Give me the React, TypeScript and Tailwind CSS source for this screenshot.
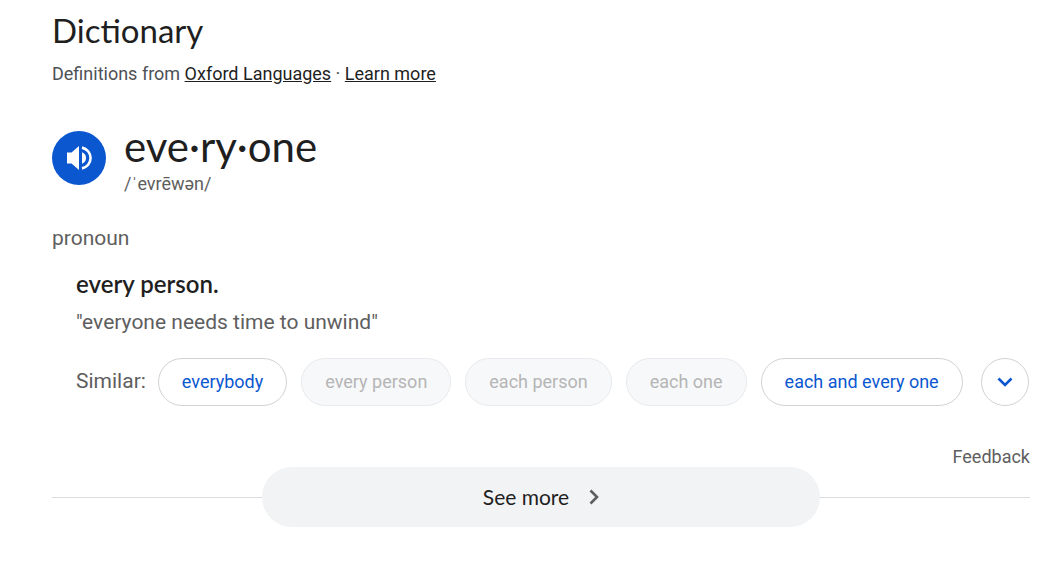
import React from 'react'

type Synonym = {
  label: string
  linked: boolean
}

const synonyms: Synonym[] = [
  { label: 'everybody', linked: true },
  { label: 'every person', linked: false },
  { label: 'each person', linked: false },
  { label: 'each one', linked: false },
  { label: 'each and every one', linked: true }
]

function SpeakerIcon() {
  return (
    <svg viewBox="0 0 54 54" className="h-[54px] w-[54px]" aria-hidden="true">
      <path d="M15 21.5h4.5l7.5-6.5v24l-7.5-6.5H15z" fill="#fff" />
      <path d="M30 21.2a6.2 6.2 0 0 1 0 11.6z" fill="#fff" />
      <path d="M30 16.6a10.6 10.6 0 0 1 0 20.8" fill="none" stroke="#fff" strokeWidth="2.6" />
    </svg>
  )
}

function SynonymChip({ label, linked }: Synonym) {
  return (
    <button
      type="button"
      disabled={!linked}
      className={`h-12 rounded-full border px-[23px] text-lg whitespace-nowrap ${
        linked ? 'border-[#d2d2d2] bg-white text-[#0b57d0]' : 'border-[#e8eaed] bg-[#f7f8fa] text-[#b5b5b5]'
      }`}
    >
      {label}
    </button>
  )
}

export default function App() {
  return (
    <main className="bg-white pt-2 pr-8 pb-9 pl-[52px] font-['Roboto',sans-serif] text-[#5e5e5e]">
      {/* Heading */}
      <h1 className="font-['Lato',sans-serif] text-[33px] leading-[44px] text-[#1f1f1f]">Dictionary</h1>
      <p className="mt-2 text-lg leading-7 text-[#4d5156]">
        Definitions from{' '}
        <a href="#oxford" className="text-[#1f1f1f] underline">Oxford Languages</a>
        {' · '}
        <a href="#learn-more" className="text-[#1f1f1f] underline">Learn more</a>
      </p>

      {/* Word and pronunciation */}
      <div className="mt-8 flex items-center gap-[18px]">
        <button type="button" aria-label="Listen" className="shrink-0 rounded-full bg-[#0b57d0]">
          <SpeakerIcon />
        </button>
        <div>
          <h2 className="font-['Lato',sans-serif] text-[42px] leading-[52px] text-[#1f1f1f]">eve·ry·one</h2>
          <p className="text-lg leading-6">/ˈevrēwən/</p>
        </div>
      </div>

      {/* Definition */}
      <p className="mt-7 text-[21px] leading-7">pronoun</p>
      <div className="mt-4 pl-6">
        <p className="font-['Lato',sans-serif] text-2xl leading-8 font-semibold text-[#1f1f1f]">every person.</p>
        <p className="mt-2 text-[21px] leading-7">"everyone needs time to unwind"</p>
        <div className="mt-[22px] flex items-center">
          <span className="mr-3 text-[21px]">Similar:</span>
          <div className="flex gap-[14px]">
            {synonyms.map((synonym) => (
              <SynonymChip key={synonym.label} {...synonym} />
            ))}
          </div>
          <button
            type="button"
            aria-label="More similar words"
            className="ml-[18px] flex h-12 w-12 shrink-0 items-center justify-center rounded-full border border-[#d2d2d2]"
          >
            <svg viewBox="0 0 16 10" className="h-[10px] w-4" aria-hidden="true">
              <path d="M1.5 1.5 8 8l6.500-6.500" fill="none" stroke="#0b57d0" strokeWidth="2.600" />
            </svg>
          </button>
        </div>
      </div>

      {/* Footer */}
      <div className="mt-10 flex justify-end">
        <a href="#feedback" className="text-lg leading-[21px]">Feedback</a>
      </div>
      <div className="flex items-center">
        <div className="h-px flex-1 bg-[#dadce0]" />
        <button
          type="button"
          className="flex h-[60px] w-[57%] items-center justify-center gap-5 rounded-full bg-[#f1f3f4] font-['Lato',sans-serif] text-[21px] text-[#1f1f1f]"
        >
          See more
          <svg viewBox="0 0 10 16" className="h-4 w-[10px]" aria-hidden="true">
            <path d="M1.500 1.500 8 8l-6.500 6.500" fill="none" stroke="#5e5e5e" strokeWidth="2.600" />
          </svg>
        </button>
        <div className="h-px flex-1 bg-[#dadce0]" />
      </div>
    </main>
  )
}
